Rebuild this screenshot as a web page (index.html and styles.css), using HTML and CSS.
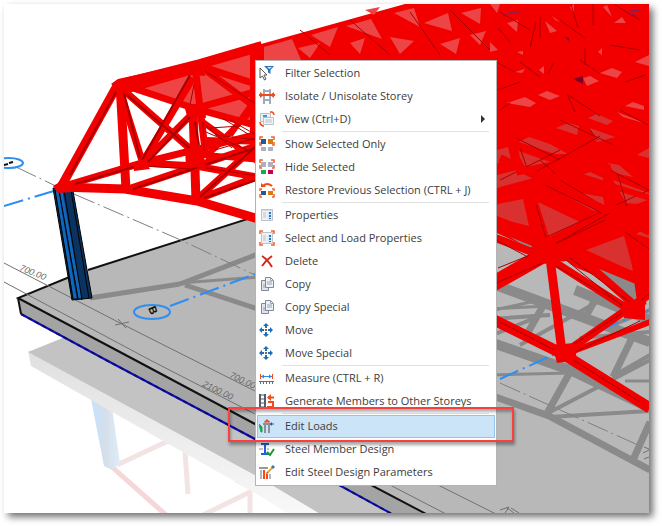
FILE: index.html
```html
<!DOCTYPE html>
<html lang="en">
<head>
<meta charset="utf-8">
<title>Edit Loads</title>
<link rel="stylesheet" href="styles.css">
</head>
<body>
<main class="viewport">
<svg class="scene" viewBox="4 4 645 509" preserveAspectRatio="xMinYMin slice" aria-hidden="true">
  <defs>
    <linearGradient id="fade" x1="0" y1="340" x2="0" y2="513" gradientUnits="userSpaceOnUse">
      <stop offset="0" stop-color="#dedede"/><stop offset="1" stop-color="#f8f8f8"/>
    </linearGradient>
    <linearGradient id="mirror" x1="92" y1="0" x2="120" y2="0" gradientUnits="userSpaceOnUse">
      <stop offset="0" stop-color="#c6e2fb"/><stop offset=".5" stop-color="#d5dfea"/><stop offset="1" stop-color="#deedfb"/>
    </linearGradient>
  </defs>

  <!-- reflection under the slab -->
  <path class="ghost" d="M117 465 168 441M185 452 188 494M203 515 250 492M250 490V515M236 480 275 500"/>
  <path class="ghost pink" d="M112 467 166 515"/>
  <path fill="url(#mirror)" d="M91 399 112 408 120 463 112 470 104 466Z"/>
  <path fill="url(#fade)" d="M28 351 31 366 262 497 290 515H325L260 470Z"/>
  <path fill="#c3c3c3" d="M28 352 70 335 200 380 400 515H322L260 478Z"/>

  <!-- slab -->
  <path fill="#b8b8b8" d="M18 298 75 274 260 215 480 150H650V515H426Z"/>
  <path fill="#a4a4a4" d="M18 298 426 515H392L21 314Z"/>
  <path class="edge" d="M72 276 18 298 135 360 255 424 428 515M18 298 21 314"/>
  <path class="edge" d="M88 270 260 215"/>
  <path class="base" d="M21 314 106 360 255 439 392 514"/>
  <path class="base-dash" d="M21 314 106 360 255 439 392 514"/>

  <!-- shadows on the slab -->
  <g class="shade">
    <path stroke-width="5" d="M90 298 180 284M180 284 258 254M185 285 258 309"/>
    <path stroke-width="3" d="M180 283 258 277M490 309 548 306M490 311 540 300M490 375 570 373M625 381H650"/>
    <path stroke-width="10" d="M490 283 590 320 650 342M490 342 570 370 650 408M575 290 650 320M600 275 642 288"/>
    <path stroke-width="7" d="M490 395 549 416 650 470M569 374 545 417M631 340 613 377M650 422 633 460M543 306 527 334M602 287 585 318"/>
    <path stroke-width="4" d="M550 412 650 360M550 417 650 411M490 285 540 262M520 345 610 295M490 319 550 315M490 336 540 316M615 375 650 355M600 330 650 310M580 338 650 332"/>
  </g>
  <path class="axis" d="M16 167 60 188 183 241 255 275M500 383 638 445"/>
  <path class="dim" d="M4 263 120 323 255 391 438 485 496 514M4 282 150 360 255 414 390 485 446 514M115 325 129 322M118 319 126 328M500 510 509 507 505 513M507 508 514 513M511 508 519 513M644 447 649 449M643 453 649 450M644 459 649 457"/>
  <g class="measure">
    <text transform="translate(19 270) rotate(22)">700.00</text>
    <text transform="translate(229 377) rotate(26)">700.00</text>
    <text transform="translate(202 386) rotate(26)">2100.00</text>
  </g>
  <path class="grid" d="M4 206 57 190M170 306 258 273M500 379 575 345M600 330 650 310"/>
  <ellipse class="bubble" cx="9" cy="163" rx="14" ry="5"/>
  <ellipse class="bubble" cx="152" cy="312" rx="18" ry="7"/>
  <text class="tag" transform="translate(148 308) rotate(68)">B</text>
  <path stroke="#111" stroke-width="2" fill="none" d="M4 165 8 164M9 163 13 162"/>

  <!-- column -->
  <path fill="#0b335f" stroke="#000" d="M53 188 73 191 92 298 72 300Z"/>
  <path fill="none" stroke="#0f67bd" stroke-width="3" d="M57 191 75 298M61 191 80 298"/>
  <path fill="none" stroke="#000" d="M55 190 73 299M59 190 78 299M64 190 82 300M71 190 89 298"/>

  <!-- roof: far bays -->
  <path fill="#ee4444" d="M118 83 200 62 260 44 260 127 193 110Z"/>
  <path fill="#f20000" d="M250 47 405 4H650V298L545 255 490 230 250 160Z"/>
  <g fill="#ed4545">
    <path d="M490 4H500L497 13ZM507 23 518 20 517 32ZM545 21 557 31 550 33ZM614 23 622 17 626 23ZM490 42 498 50 490 52ZM635 62 649 55V66ZM600 73 612 68 622 72 617 78ZM583 78 590 76 599 81 587 86ZM538 95 547 91 560 96 550 100ZM507 103 525 97 536 103 530 107ZM625 106 633 102 644 106V110ZM617 112 647 124 623 117ZM515 72 525 69 522 73ZM539 70 544 66V74ZM598 52 602 48V55ZM603 7 607 5 612 17ZM517 52 523 51V55ZM570 7 574 4V14ZM552 16 560 22 555 20Z"/>
    <path d="M264 47 292 39 301 60H264ZM311 35 338 27 330 47ZM346 26 371 19 382 39ZM394 13 414 8 420 27ZM298 48 320 43 310 58ZM350 43 365 38 360 54ZM390 37 414 41 400 54ZM424 23 448 13 452 31ZM440 44 460 38 456 54ZM461 13 481 8 480 24ZM470 35 486 31 480 45ZM365 10 380 7 374 15Z"/>
  </g>
  <g fill="#d93030">
    <path d="M588 118 597 114 613 121 607 125ZM556 128 568 123 579 126 577 135ZM519 142 529 137 550 144 568 154 555 154ZM516 150 550 162 525 167ZM497 150 508 147 511 160 497 163ZM590 128 615 137 597 142ZM608 163 619 165 633 177 614 173ZM637 155 649 148V158ZM577 177 590 172 603 178V185ZM497 204 523 199 529 226 497 218ZM538 202 580 222 549 237ZM552 188 603 197 606 213 592 210ZM613 180 649 193V205L626 203ZM586 250 624 236 634 272ZM636 234 649 227V238ZM497 175 517 170 540 176 497 188Z"/>
  </g>
  <path class="dark" d="M498 63 515 72M530 47 536 22M540 38V17M571 4 578 28M560 20 585 38M593 4V25M520 62 540 77M548 74 554 62M580 60 600 74M568 95 600 116M575 112 567 94M610 45 640 50M585 48V65M625 82 645 75M620 110 648 125M500 12 530 30M615 5 640 20M498 28 510 42M512 136 560 160M560 120 620 148M530 175 600 136M575 165 645 130M540 160 560 178M520 148 527 168M500 180 560 150M590 130 598 140M610 170 649 190M560 180 610 210M540 240 649 190M498 90 520 82M500 110 510 103M300 30 330 55M350 20 390 55M410 12 440 55M450 10 490 50"/>
  <path fill="#7d0024" d="M573 79 583 76V84ZM565 37 569 38V41Z"/>
  <path stroke="#772266" fill="none" d="M503 16Q512 10 519 13M630 10 640 11M630 14 638 16"/>

  <!-- roof: openings that show the slab -->
  <path fill="#b8b8b8" d="M496 234 532 248 522 257 496 265ZM557 262 567 261 630 306 600 292Z"/>
  <path fill="#8a8a8a" d="M588 260 638 279 641 297 632 305Z"/>
  <path fill="#8a8a8a" d="M510 237 532 246 530 249Z"/>

  <!-- near truss, right -->
  <g class="bar">
    <path stroke-width="11" d="M490 219 548 242 650 284M490 288 545 257 615 218 650 205M490 318 563 354 650 408"/>
    <path stroke-width="9" d="M528 198 541 250M606 165 614 218M631 225 642 305M550 258 562 352"/>
    <path stroke-width="8" d="M490 236 548 258 636 314M560 356 632 306 650 294M490 203 560 176 650 130M500 158 650 232M560 240 640 310"/>
    <path stroke-width="6" d="M563 355 650 322M490 280 550 246M560 170 650 198M512 130 520 175"/>
  </g>
  <path class="dark" d="M496 283 545 262M496 240 528 257M540 251 605 220M553 245 610 213M570 258 630 302M566 260 625 308M556 266 618 302M568 348 622 313M575 352 640 321M500 322 570 358 640 402M498 268 530 255M545 264 550 246M630 310 650 293M618 175 627 206M536 205 546 238M625 232 649 249M545 185 600 212"/>

  <!-- near truss, left -->
  <g class="bar">
    <path stroke-width="9" d="M61 187 118 84M120 84 126 189M193 108 196 201M58 187 125 189 197 201 262 220"/>
    <path stroke-width="10" d="M117 85 200 64 262 46"/>
    <path stroke-width="7" d="M61 187 142 163 262 133M118 84 143 164M120 87 196 154M118 83 193 108 262 127M142 163 193 78M140 166 195 111M128 189 262 144M142 163 196 166 262 178M196 200 262 140M196 200 262 175M200 66 262 86M200 66 262 112M195 66 206 158M193 109 262 90"/>
    <path stroke-width="6" d="M230 135 262 90M205 155 262 160M200 120 262 165M205 158 258 104M206 140 262 142"/>
  </g>
  <path class="dark wide" d="M70 175 116 92M124 93 140 158M127 95 193 151M75 184 140 165M142 160 190 75M148 162 190 117M133 189 258 147M200 197 255 147M204 198 262 178M195 122 199 145"/>
  <path class="dark" d="M203 122 204 150M215 135 258 140M206 132 252 152M205 71 262 108M205 125 232 148M194 85 190 105M222 118 248 134M145 166 190 169M206 168 258 176M210 128 240 126M230 120 258 136M215 150 256 138"/>
  <path class="node" d="M111 84 118 79 204 60 205 76 190 75 125 94ZM53 186 65 179 72 192 58 193ZM133 164 144 159 150 169 134 171ZM184 105 205 103 206 118 187 116ZM185 149 202 146 206 168 186 167ZM537 248 553 239 562 254 543 264ZM622 302 645 300 645 320 624 318ZM552 345 574 343 577 360 557 363Z"/>
</svg>

<menu class="context-menu">
  <li><button type="button"><svg viewBox="0 0 16 16"><path d="M5 1H15L11.5 5V9L9 7.500V5Z" fill="#2e75b6"/><path d="M8 2H13L10.500 4Z" fill="#d6e8f7"/><path d="M1 3V13L3.500 11 5.500 15 7 14 5 10H8Z" fill="#fff" stroke="#555"/></svg><span>Filter Selection</span></button></li>
  <li><button type="button"><svg viewBox="0 0 16 16"><path d="M5 1V16M11 1V16M5 3H11M5 12H11M4 2H6M10 2H12" stroke="#a5a9b8" stroke-width="2"/><path d="M0 7H16" stroke="#f04a1d" stroke-width="2"/><path d="M1 4 5 7 1 10ZM15 4 11 7 15 10Z" fill="#f04a1d"/></svg><span>Isolate / Unisolate Storey</span></button></li>
  <li><button type="button"><svg viewBox="0 0 16 16"><path d="M1.500 2.500H11.500V10.500H1.500Z" fill="#eef1f4" stroke="#b8bfc7"/><path d="M4.500 6.500H14.500V13.500H4.500Z" fill="#f5f6f8" stroke="#b8bfc7"/><path d="M4 5H8" stroke="#3c95df" stroke-width="2"/><path d="M6 9H13M6 11H13" stroke="#b8bfc7"/><path d="M11 1H13Q15 2 15 4M1 11Q1 14 4 15H5" fill="none" stroke="#f04a1d" stroke-width="1.500"/></svg><span>View (Ctrl+D)</span><i class="more"></i></button></li>
  <li class="rule" role="separator"></li>
  <li><button type="button"><svg viewBox="0 0 16 16"><path class="corners" d="M1 4V1H4M12 1H15V4M1 6V9H3M15 6V9H13"/><path d="M2 3H7V8H2Z" fill="#1c5c99"/><path d="M9 3H14V8H9Z" fill="#d97a0b"/><path d="M2 11H7V15H2ZM9 11H14V15H9Z" fill="#aeb2c0"/></svg><span>Show Selected Only</span></button></li>
  <li><button type="button"><svg viewBox="0 0 16 16"><path class="corners" d="M1 4V1H4M12 1H15V4M1 6V9H3M15 6V9H13"/><path d="M2 3H7V8H2ZM9 3H14V8H9Z" fill="#aeb2c0"/><path d="M2 11H7V15H2Z" fill="#0db14b"/><path d="M9 11H14V15H9Z" fill="#c4004f"/></svg><span>Hide Selected</span></button></li>
  <li><button type="button"><svg viewBox="0 0 16 16"><path d="M4 4Q8 0 13 4" fill="none" stroke="#f04a1d" stroke-width="2"/><path d="M2 1V5H7Z" fill="#f04a1d"/><path class="corners" d="M1 9V7H3M13 7H15V9M1 12V15H3M15 12V15H13"/><path d="M2 9H7V13H2Z" fill="#1c5c99"/><path d="M9 9H14V13H9Z" fill="#d97a0b"/></svg><span>Restore Previous Selection (CTRL + J)</span></button></li>
  <li class="rule" role="separator"></li>
  <li><button type="button"><svg viewBox="0 0 16 16"><path d="M2.500 2.500H13.500V13.500H2.500Z" fill="#eef1f5" stroke="#bcc3cd"/><path d="M2 3H14M4 6H7M4 8H7M4 10H7" stroke="#bcc3cd" stroke-width="1"/><path d="M8.500 5H12.500V13H8.500Z" fill="#d8eafa"/><path d="M11 5V12" stroke="#2776bd" stroke-width="2" stroke-dasharray="2 1"/></svg><span>Properties</span></button></li>
  <li><button type="button"><svg viewBox="0 0 16 16"><path d="M2.500 2.500H13.500V13.500H2.500Z" fill="#eef1f5" stroke="#bcc3cd"/><path d="M4 6H7M4 8H7M4 10H7" stroke="#bcc3cd"/><path d="M8.500 5H12.500V13H8.500Z" fill="#d8eafa"/><path d="M11 5V12" stroke="#2776bd" stroke-width="2" stroke-dasharray="2 1"/><path class="corners" d="M1 4V1H4M12 1H15V4M1 12V15H4M15 12V15H12"/></svg><span>Select and Load Properties</span></button></li>
  <li><button type="button"><svg viewBox="0 0 16 16"><path d="M3 3Q9 7 13 14M13 3Q7 7 3 13" fill="none" stroke="#d12a1c" stroke-width="2"/></svg><span>Delete</span></button></li>
  <li><button type="button"><svg viewBox="0 0 16 16"><path d="M2.500 4.500H9.500V14.500H2.500Z" fill="#dfe4ee" stroke="#7f8799"/><path d="M6.500 1.500H11.500L14.500 4.500V11.500H6.500Z" fill="#eef1f6" stroke="#7f8799"/><path d="M11.500 1.500V4.500H14.500M8 6H13M8 8H13M4 9H6M4 11H6" fill="none" stroke="#9ba3b3"/></svg><span>Copy</span></button></li>
  <li><button type="button"><svg viewBox="0 0 16 16"><path d="M2.500 4.500H9.500V14.500H2.500Z" fill="#dfe4ee" stroke="#7f8799"/><path d="M6.500 1.500H11.500L14.500 4.500V11.500H6.500Z" fill="#eef1f6" stroke="#7f8799"/><path d="M11.500 1.500V4.500H14.500M8 6H13M8 8H13M4 9H6M4 11H6" fill="none" stroke="#9ba3b3"/></svg><span>Copy Special</span></button></li>
  <li><button type="button"><svg viewBox="0 0 16 16"><path d="M7 1 10 4H8V6H6V4H4ZM7 15 10 12H8V10H6V12H4ZM0 8 3 5V7H5V9H3V11ZM14 8 11 5V7H9V9H11V11Z" fill="#1f6fb8"/><path d="M6 7H8V9H6Z" fill="#666"/></svg><span>Move</span></button></li>
  <li><button type="button"><svg viewBox="0 0 16 16"><path d="M7 1 10 4H8V6H6V4H4ZM7 15 10 12H8V10H6V12H4ZM0 8 3 5V7H5V9H3V11ZM14 8 11 5V7H9V9H11V11Z" fill="#1f6fb8"/><path d="M6 7H8V9H6Z" fill="#666"/></svg><span>Move Special</span></button></li>
  <li class="rule" role="separator"></li>
  <li><button type="button"><svg viewBox="0 0 16 16"><path d="M1.500 4V9M13.500 4V9" stroke="#f04a1d"/><path d="M2 6.500H13" stroke="#2c8be0"/><path d="M5 4.500 2 6.500 5 8.500ZM10 4.500 13 6.500 10 8.500Z" fill="#2c8be0"/><path d="M0 11.500H15" stroke="#666c80"/><path d="M1.500 11V14M4.500 11V14M7.500 11V14M10.500 11V14M13.500 11V14" stroke="#666c80"/></svg><span>Measure (CTRL + R)</span></button></li>
  <li><button type="button"><svg viewBox="0 0 16 16"><path d="M1 1V16M6 1V16" stroke="#555b6b" stroke-width="2"/><path d="M1 2H7M1 6H7M1 10H7M1 14H7" stroke="#555b6b"/><path d="M11 4.500H9M9 9H14V14H8" fill="none" stroke="#f04a1d" stroke-width="2"/><path d="M12 1V8L8 4.500Z" fill="#f04a1d"/><path d="M11 4.500H15" stroke="#f04a1d" stroke-width="2"/></svg><span>Generate Members to Other Storeys</span></button></li>
  <li class="rule" role="separator"></li>
  <li><button type="button" class="active"><svg viewBox="0 0 16 16"><path d="M0 6 3 9V14H2Z" fill="#18a84a" stroke="#18a84a"/><path d="M4 6H12M6 6V15M10 6V15" stroke="#8b8f9c" stroke-width="2"/><path d="M8 1 11 4H5Z" fill="#f04a1d"/><path d="M5 4H11" stroke="#f04a1d" stroke-width="1"/><path d="M15 6H13" stroke="#1c5c99" stroke-width="1"/><path d="M11 6 13 4V8Z" fill="#1c5c99"/></svg><span>Edit Loads</span></button></li>
  <li><button type="button"><svg viewBox="0 0 16 16"><path d="M2 3H10M2 13H10M6 3V13" stroke="#2461d8" stroke-width="2"/><path d="M0 8H4M8 8H10" stroke="#888"/><path d="M8 11 11 14 15 8" fill="none" stroke="#179b2c" stroke-width="2"/></svg><span>Steel Member Design</span></button></li>
  <li><button type="button"><svg viewBox="0 0 16 16"><path d="M0 4H9" stroke="#999" stroke-width="2"/><path d="M2 6V15M11 10V15" stroke="#b5b5bb" stroke-width="2"/><path d="M5 6V15M8 10V15" stroke="#f04a1d" stroke-width="2"/><path d="M8 9 14 3" stroke="#e9a63a" stroke-width="2"/><path d="M13 4 15 2" stroke="#3a7ab5" stroke-width="3"/><path d="M7 10 8 8 9 9Z" fill="#333"/></svg><span>Edit Steel Design Parameters</span></button></li>
</menu>
<div class="callout"></div>
</main>
</body>
</html>
```
FILE: styles.css
```css
* { box-sizing: border-box; }
html, body { height: 100%; }
body {
  margin: 0;
  padding: 4px 13px 13px 4px;
  background: #fff;
  font-family: "Open Sans", "Noto Sans", sans-serif;
}
.viewport {
  position: relative;
  height: 100%;
  background: #fff;
  box-shadow: 4px 4px 7px rgba(0, 0, 0, .55);
}
.scene { display: block; width: 100%; height: 100%; }

.edge { fill: none; stroke: #111; stroke-width: 2; }
.base { fill: none; stroke: #0a0ac8; stroke-width: 2; }
.base-dash { fill: none; stroke: #111; stroke-width: 2; stroke-dasharray: 4 4; opacity: .6; }
.shade { fill: none; stroke: #8a8a8a; }
.axis { fill: none; stroke: #808080; stroke-dasharray: 22 4 2 4; }
.dim { fill: none; stroke: #707070; }
.measure { font: italic 9px "Liberation Sans", sans-serif; fill: #666; }
.grid { fill: none; stroke: #2f8ef0; stroke-width: 2; stroke-dasharray: 20 5 2 5; }
.bubble { fill: none; stroke: #2f8ef0; stroke-width: 2; }
.tag { font: bold 11px "Liberation Sans", sans-serif; fill: #111; }
.ghost { fill: none; stroke: #f3e4e4; stroke-width: 5; }
.pink { stroke: #f6d6d6; }
.bar { fill: none; stroke: #f20000; }
.dark { fill: none; stroke: #a80000; stroke-width: 1; }
.wide { stroke-width: 2; }
.node { fill: #f20000; }

.context-menu {
  position: absolute;
  top: 56px;
  left: 251px;
  width: 242px;
  margin: 0;
  padding: 1px;
  list-style: none;
  background: #fff;
  border: 1px solid #b4b4b4;
}
.context-menu button {
  display: flex;
  align-items: center;
  gap: 10px;
  width: 100%;
  height: 23px;
  padding: 0 9px 2px 1px;
  border: 1px solid transparent;
  background: none;
  color: #3c3c3c;
  font: 11px/16px "Open Sans", "Noto Sans", sans-serif;
  text-align: left;
  white-space: nowrap;
}
.context-menu .active { background: #cce4f7; border-color: #92c4ec; }
.context-menu svg { flex: none; width: 16px; height: 16px; }
.corners { fill: none; stroke: #f2602f; stroke-width: 1.5; }
.rule { height: 2px; margin: 0 6px 0 25px; border-top: 1px solid #e2e2e2; }
.more {
  margin-left: auto;
  border: 4px solid transparent;
  border-right-width: 0;
  border-left-color: #333;
}
.callout {
  position: absolute;
  top: 403px;
  left: 224px;
  width: 286px;
  height: 35px;
  border: 2px solid #fb3f3f;
  box-shadow: 1px 3px 3px rgba(0, 0, 0, .35), inset 1px 3px 3px rgba(0, 0, 0, .3);
  pointer-events: none;
}
```
